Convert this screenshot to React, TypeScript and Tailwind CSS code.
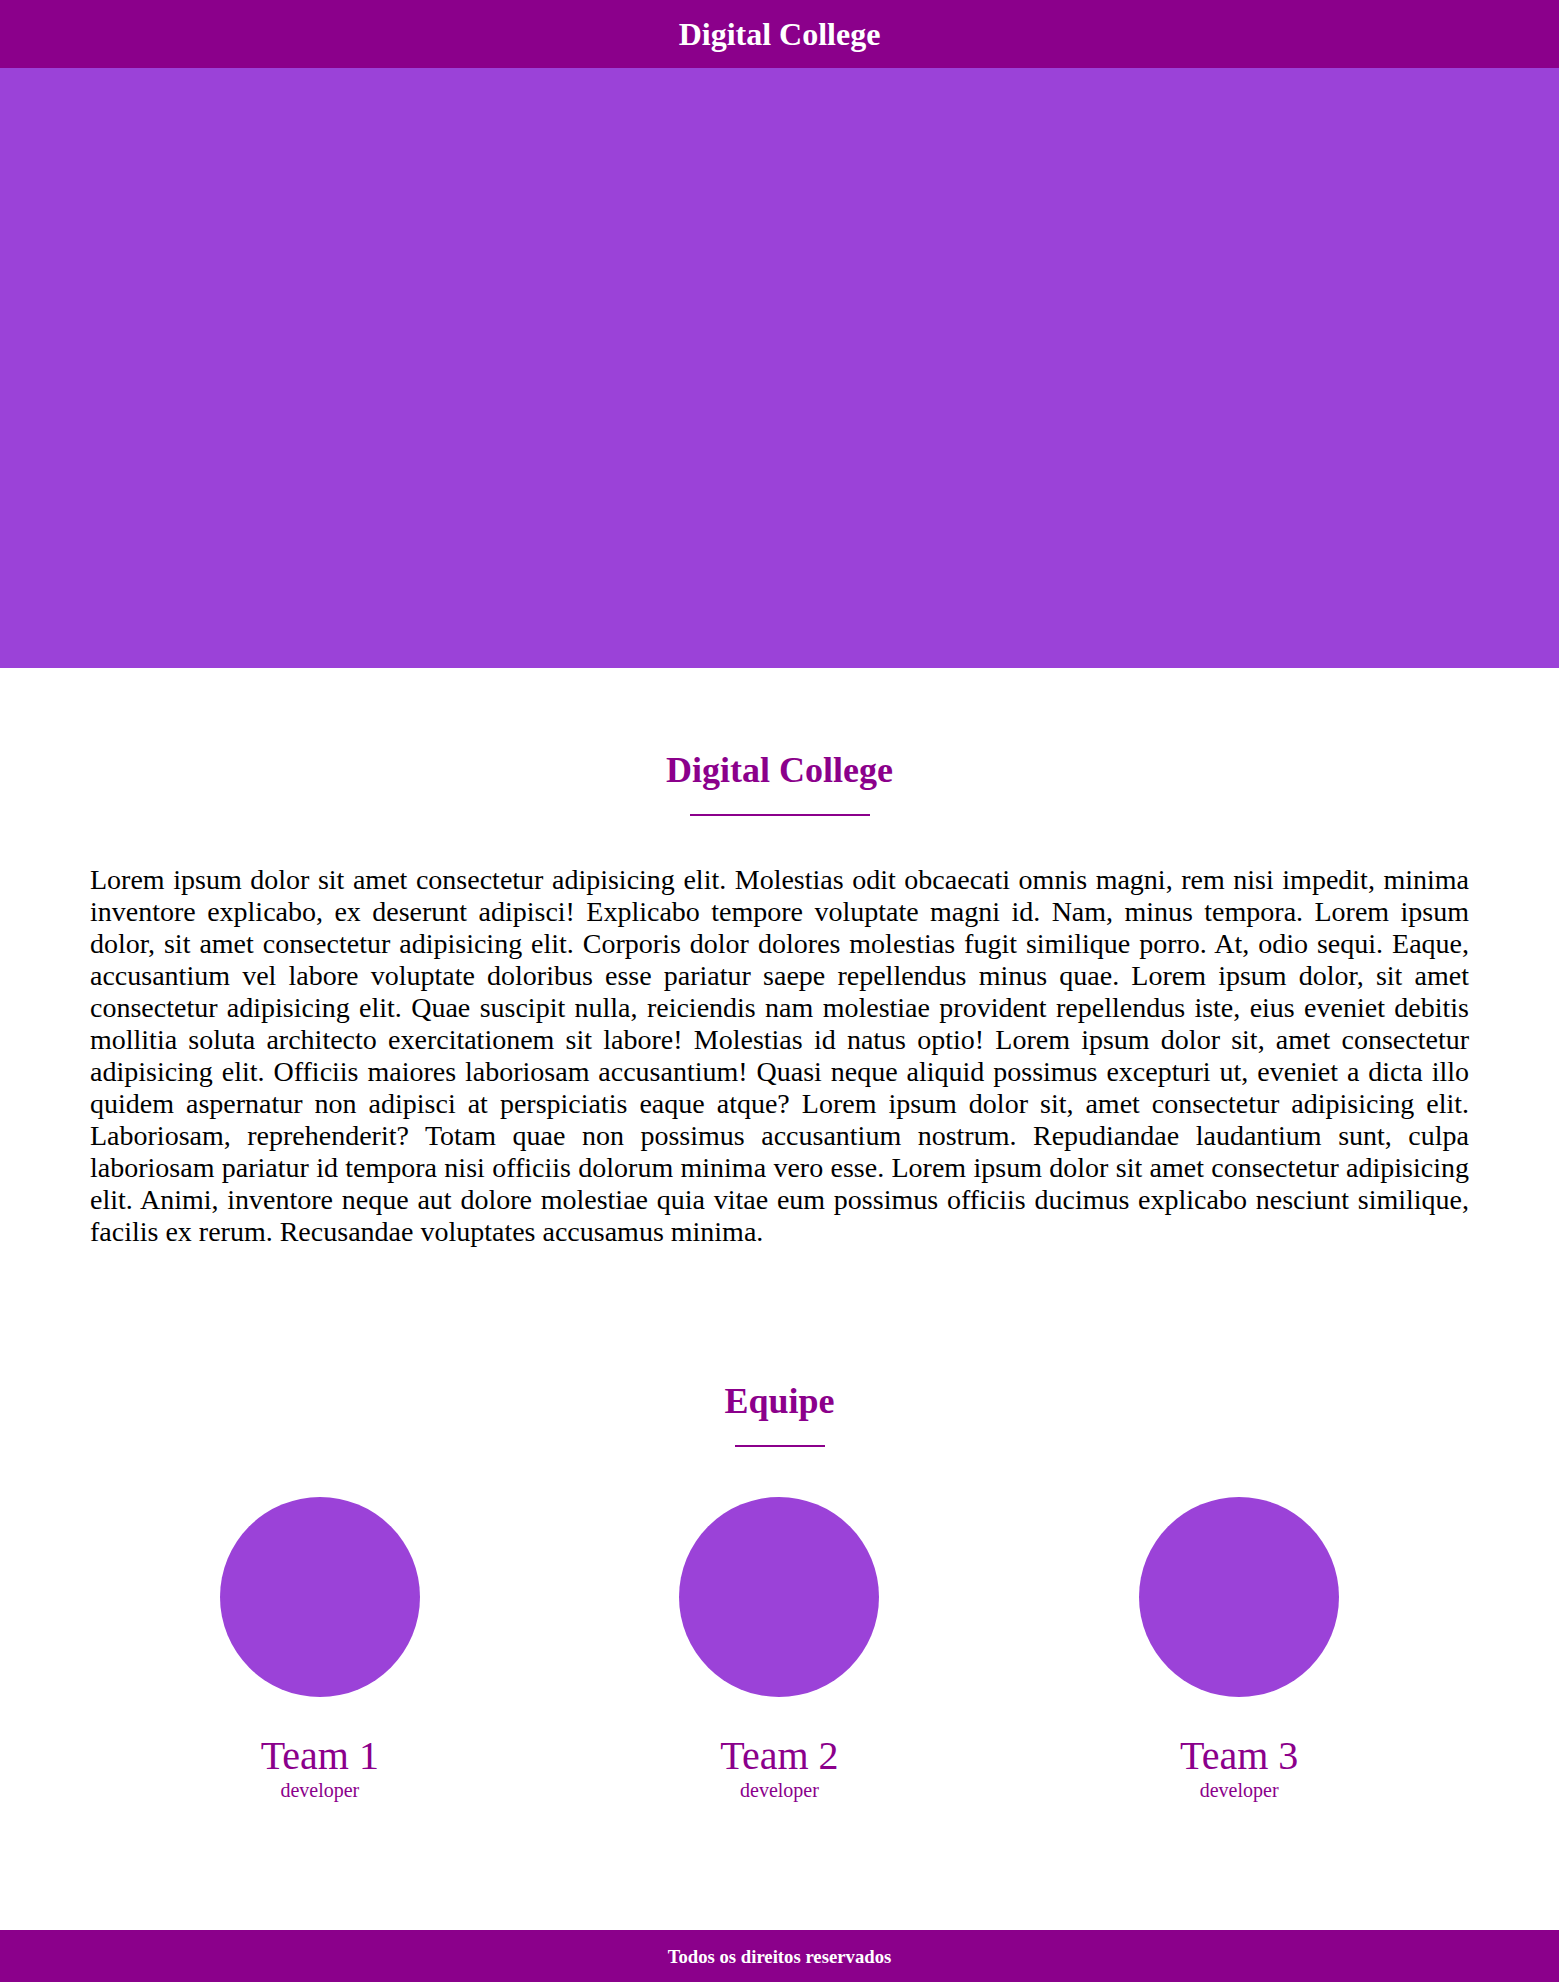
const paragraph =
    'Lorem ipsum dolor sit amet consectetur adipisicing elit. Molestias odit obcaecati omnis magni, rem nisi impedit, minima inventore explicabo, ex deserunt adipisci! Explicabo tempore voluptate magni id. Nam, minus tempora. Lorem ipsum dolor, sit amet consectetur adipisicing elit. Corporis dolor dolores molestias fugit similique porro. At, odio sequi. Eaque, accusantium vel labore voluptate doloribus esse pariatur saepe repellendus minus quae. Lorem ipsum dolor, sit amet consectetur adipisicing elit. Quae suscipit nulla, reiciendis nam molestiae provident repellendus iste, eius eveniet debitis mollitia soluta architecto exercitationem sit labore! Molestias id natus optio! Lorem ipsum dolor sit, amet consectetur adipisicing elit. Officiis maiores laboriosam accusantium! Quasi neque aliquid possimus excepturi ut, eveniet a dicta illo quidem aspernatur non adipisci at perspiciatis eaque atque? Lorem ipsum dolor sit, amet consectetur adipisicing elit. Laboriosam, reprehenderit? Totam quae non possimus accusantium nostrum. Repudiandae laudantium sunt, culpa laboriosam pariatur id tempora nisi officiis dolorum minima vero esse. Lorem ipsum dolor sit amet consectetur adipisicing elit. Animi, inventore neque aut dolore molestiae quia vitae eum possimus officiis ducimus explicabo nesciunt similique, facilis ex rerum. Recusandae voluptates accusamus minima.';

const team = [
    { name: 'Team 1', role: 'developer' },
    { name: 'Team 2', role: 'developer' },
    { name: 'Team 3', role: 'developer' },
];

function SectionTitle({ title, lineWidth }: { title: string; lineWidth: string }) {
    return (
        <div className="flex flex-col items-center">
            <h2 className="text-[36px] font-bold leading-[normal] text-[#8b008b]">{title}</h2>
            <div className={`mt-[23px] h-[2px] bg-[#8b008b] ${lineWidth}`} />
        </div>
    );
}

export default function App() {
    return (
        <div className="min-h-screen bg-white text-black font-['Liberation_Serif','Times_New_Roman',serif]">
            <header className="flex h-[68px] items-center justify-center bg-[#8b008b]">
                <h1 className="text-[32px] font-bold leading-[normal] text-white">Digital College</h1>
            </header>

            <div className="h-[600px] bg-[#9b42d8]" />

            <section className="px-[90px] pt-[81px]">
                <SectionTitle title="Digital College" lineWidth="w-[180px]" />
                <p className="mt-[48px] text-justify text-[28px] leading-[normal]">{paragraph}</p>
            </section>

            <section className="px-[90px] pt-[132px]">
                <SectionTitle title="Equipe" lineWidth="w-[90px]" />
                <div className="mt-[50px] grid grid-cols-3">
                    {team.map((member) => (
                        <div key={member.name} className="flex flex-col items-center">
                            <div className="h-[200px] w-[200px] rounded-full bg-[#9b42d8]" />
                            <h3 className="mt-[35px] text-[40px] leading-[normal] text-[#8b008b]">{member.name}</h3>
                            <span className="text-[20px] leading-[normal] text-[#8b008b]">{member.role}</span>
                        </div>
                    ))}
                </div>
            </section>

            <footer className="mt-[128px] flex h-[53px] items-center justify-center bg-[#8b008b]">
                <h3 className="text-[18.72px] font-bold leading-[normal] text-white">Todos os direitos reservados</h3>
            </footer>
        </div>
    );
}
